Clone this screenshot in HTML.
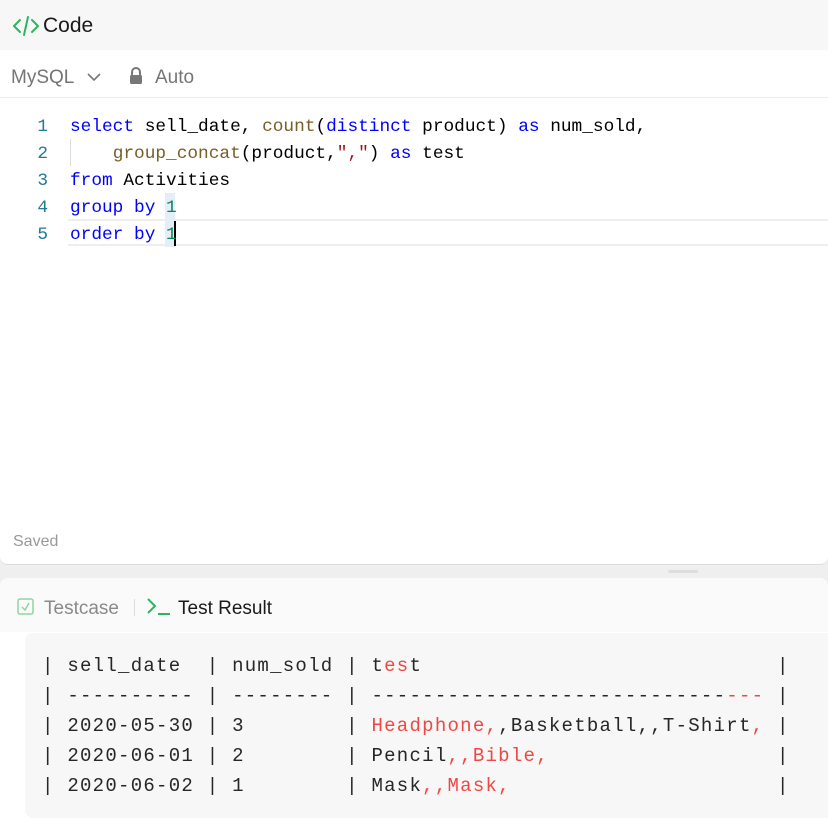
<!DOCTYPE html>
<html><head><style>
*{margin:0;padding:0;box-sizing:border-box}
body{width:828px;height:818px;overflow:hidden;background:#efefef;font-family:"Liberation Sans",sans-serif;position:relative}
.hdr{position:absolute;left:0;top:0;width:828px;height:50px;background:#f7f7f7}
.hdr .t{position:absolute;left:43px;top:14px;font-size:21px;color:#1a1a1a}
.panel{position:absolute;left:0;top:50px;width:828px;height:515px;background:#fff;border-radius:0 0 8px 8px;border-bottom:1px solid #dcdcdc}
.bar{position:absolute;left:0;top:0;width:828px;height:48px;border-bottom:1px solid #ececec}
.mysql{position:absolute;left:11px;top:17px;font-size:19px;color:#757575}
.auto{position:absolute;left:155px;top:17px;font-size:19px;color:#757575}
.code{position:absolute;left:0;top:64px;font-family:"Liberation Mono",monospace;font-size:17.8px;line-height:27px}
.ln{position:absolute;left:28px;width:20px;text-align:right;color:#237893}
.cl{position:absolute;left:70px;white-space:pre;color:#000}
.k{color:#0000ff}.f{color:#795e26}.s{color:#a31515}.n{color:#098658}
.saved{position:absolute;left:13px;top:483px;font-size:16px;color:#999}
.lower{position:absolute;left:0;top:578px;width:828px;height:240px;background:#fff;border-radius:8px 8px 0 0}
.lh{position:absolute;left:0;top:0;width:828px;height:54px;background:#fafafa;border-radius:8px 8px 0 0}
.box{position:absolute;left:25px;top:55px;width:810px;height:185px;background:#f7f7f7;border-radius:8px}
pre{position:absolute;left:17px;top:18px;font-family:"Liberation Mono",monospace;font-size:19px;letter-spacing:1.27px;line-height:30px;color:#262626}
.r{color:#ef4743}
</style></head><body>
<div class="hdr">
<svg style="position:absolute;left:12px;top:15px" width="28" height="22" viewBox="0 0 28 22"><path d="M8 5 L2 11 L8 17 M20 5 L26 11 L20 17 M16 2 L12 20" fill="none" stroke="#2db55d" stroke-width="2" stroke-linecap="round" stroke-linejoin="round"/></svg>
<div class="t">Code</div></div>
<div class="panel">
<div class="bar">
<div class="mysql">MySQL</div>
<svg style="position:absolute;left:86px;top:22px" width="16" height="10"><path d="M2 2 L8 8 L14 2" fill="none" stroke="#777" stroke-width="1.6"/></svg>
<svg style="position:absolute;left:128px;top:17px" width="16" height="18"><path d="M4 8 V5 a4 4 0 0 1 8 0 V8" fill="none" stroke="#777" stroke-width="2"/><rect x="2" y="8" width="12" height="9" rx="1.5" fill="#777"/></svg>
<div class="auto">Auto</div>
</div>
<div style="position:absolute;left:68px;top:169px;width:760px;height:27px;border-top:2px solid #eee;border-bottom:2px solid #eee"></div>
<div style="position:absolute;left:165px;top:143px;width:10px;height:54px;background:#e3eef8"></div>
<div style="position:absolute;left:70px;top:89px;width:1px;height:27px;background:#ddd"></div>
<div style="position:absolute;left:174px;top:171px;width:2px;height:25px;background:#000"></div>
<div class="code">
<div class="ln" style="top:0">1</div><div class="cl" style="top:0"><span class="k">select</span> sell_date, <span class="f">count</span>(<span class="k">distinct</span> product) <span class="k">as</span> num_sold,</div>
<div class="ln" style="top:27px">2</div><div class="cl" style="top:27px">    <span class="f">group_concat</span>(product,<span class="s">","</span>) <span class="k">as</span> test</div>
<div class="ln" style="top:54px">3</div><div class="cl" style="top:54px"><span class="k">from</span> Activities</div>
<div class="ln" style="top:81px">4</div><div class="cl" style="top:81px"><span class="k">group by</span> <span class="n">1</span></div>
<div class="ln" style="top:108px">5</div><div class="cl" style="top:108px"><span class="k">order by</span> <span class="n">1</span></div>
</div>
<div class="saved">Saved</div>
</div>
<div style="position:absolute;left:668px;top:570px;width:30px;height:3px;background:#ddd;border-radius:2px"></div>
<div class="lower">
<div class="lh">
<svg style="position:absolute;left:17px;top:20px" width="18" height="18"><rect x="1" y="1" width="15" height="15" rx="2" fill="none" stroke="#8fd4a3" stroke-width="1.5"/><path d="M5 9 L8 12 L12 5" fill="none" stroke="#8fd4a3" stroke-width="1.5"/></svg>
<div style="position:absolute;left:44px;top:20px;font-size:19px;color:#8a8a8a">Testcase</div>
<div style="position:absolute;left:134px;top:21px;width:1px;height:17px;background:#ddd"></div>
<svg style="position:absolute;left:146px;top:19px" width="26" height="20"><path d="M2 2 L9 9 L2 16" fill="none" stroke="#2db55d" stroke-width="2"/><path d="M12 17 H24" stroke="#2db55d" stroke-width="2"/></svg>
<div style="position:absolute;left:178px;top:20px;font-size:19px;color:#1a1a1a">Test Result</div>
</div>
<div class="box"><pre>| sell_date  | num_sold | t<span class="r">es</span>t                            |
| ---------- | -------- | ----------------------------<span class="r">---</span> |
| 2020-05-30 | 3        | <span class="r">Headphone,</span>,Basketball,,T-Shirt<span class="r">,</span> |
| 2020-06-01 | 2        | Pencil<span class="r">,,Bible,</span>                  |
| 2020-06-02 | 1        | Mask<span class="r">,,Mask,</span>                     |</pre></div>
</div>
</body></html>
